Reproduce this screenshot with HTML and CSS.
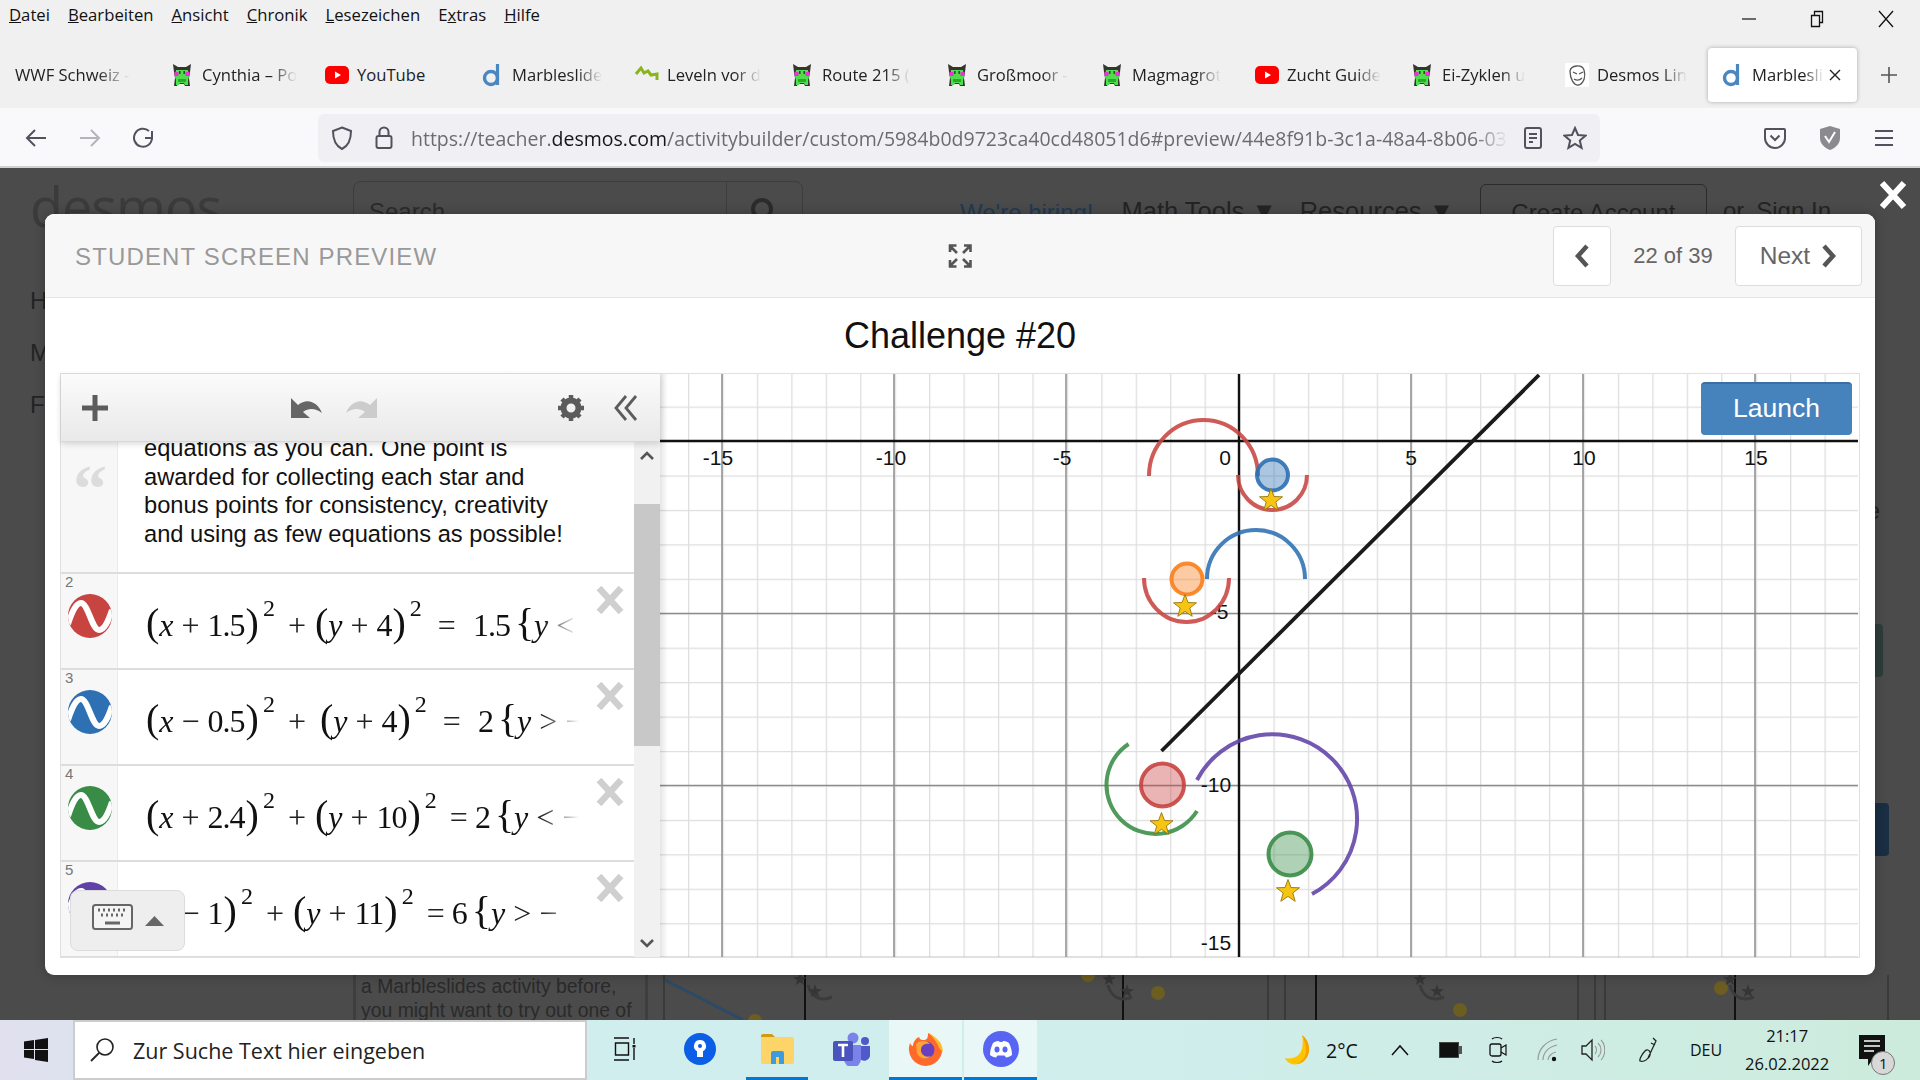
FILE: index.html
```html
<!DOCTYPE html>
<html>

<head>
    <title>Marbleslides</title>
    <link rel="stylesheet" href="styles.css">
</head>

<body>
    <!-- shared icons -->
    <svg class="defs" width="0" height="0">
        <symbol id="pika" viewBox="0 0 24 24">
            <path d="M3 1l5 3h8l5-3-1 8-1 6 1 8h-5l-1-2h-6l-1 2H4l1-8-1-6z" fill="#35352f" />
            <path d="M6 7h12l1 7-1 3 0 5h-3l-1-2H10l-1 2H6l0-5-1-3z" fill="#4ede4e" />
            <rect x="4.5" y="9" width="4" height="4" fill="#f02fd8" />
            <rect x="15.5" y="9" width="4" height="4" fill="#f02fd8" />
            <rect x="9" y="8" width="1.6" height="3" fill="#1d5a1d" />
            <rect x="13.4" y="8" width="1.6" height="3" fill="#1d5a1d" />
            <rect x="8" y="16" width="8" height="3" fill="#2aa82a" />
        </symbol>
        <symbol id="yt" viewBox="0 0 24 24">
            <rect x="0" y="3" width="24" height="18" rx="5" fill="#f00" />
            <path d="M10 8.5l6 3.5-6 3.5z" fill="#fff" />
        </symbol>
        <symbol id="dlogo" viewBox="0 0 24 24">
            <circle cx="11" cy="15" r="6.5" fill="none" stroke="#4a86c0" stroke-width="3.4" />
            <path d="M17.5 1v21" stroke="#4a86c0" stroke-width="3.2" />
        </symbol>
        <symbol id="wave" viewBox="0 0 44 44">
            <clipPath id="waveclip">
                <circle cx="22" cy="22" r="22" />
            </clipPath>
            <circle cx="22" cy="22" r="22" fill="currentColor" />
            <path clip-path="url(#waveclip)" d="M0 30C4 18 8 9 13 9c7 0 11 27 18 27 5 0 9-8 13-20" fill="none" stroke="#fff" stroke-width="6" />
        </symbol>
        <symbol id="del" viewBox="0 0 28 28">
            <path d="M3 2l22 24M25 2L3 26" stroke="#cfcfcf" stroke-width="6.5" fill="none" />
        </symbol>
        <symbol id="star" viewBox="-12 -12 24 24">
            <path d="M0-11.5l3 8 8.5.3-6.7 5.2 2.4 8.3L0 5.4l-7.200 4.900 2.400-8.300-6.700-5.200 8.500-.3z" fill="#f6c412" stroke="#96760e" stroke-width=".9" />
        </symbol>
        <symbol id="dimstar" viewBox="-12 -12 24 24">
            <path d="M0-11.5l3 8 8.5.3-6.7 5.2 2.4 8.3L0 5.4l-7.200 4.900 2.400-8.300-6.700-5.200 8.500-.3z" fill="#363636" />
        </symbol>
    </svg>

    <div class="window">
        <div class="menubar">
            <span><u>D</u>atei</span>
            <span><u>B</u>earbeiten</span>
            <span><u>A</u>nsicht</span>
            <span><u>C</u>hronik</span>
            <span><u>L</u>esezeichen</span>
            <span>E<u>x</u>tras</span>
            <span><u>H</u>ilfe</span>
            <div class="winbtns">
                <svg width="16" height="16" viewBox="0 0 16 16"><path d="M1 8h14" stroke="#111" stroke-width="1.2" /></svg>
                <svg width="16" height="18" viewBox="0 0 16 18"><path d="M2.500 5.500h8v11h-8zM5.500 5V1.500h8v11H11" fill="none" stroke="#111" stroke-width="1.300" /></svg>
                <svg width="18" height="18" viewBox="0 0 18 18"><path d="M2 1l14 16M16 1L2 17" stroke="#111" stroke-width="1.300" /></svg>
            </div>
        </div>

        <div class="tabs">
            <div class="tab nofav"><span class="tabtext">WWF Schweiz -</span></div>
            <div class="tab"><svg class="fav"><use href="#pika" /></svg><span class="tabtext">Cynthia – Po</span></div>
            <div class="tab"><svg class="fav"><use href="#yt" /></svg><span class="tabtext plain">YouTube</span></div>
            <div class="tab"><svg class="fav"><use href="#dlogo" /></svg><span class="tabtext">Marbleslide</span></div>
            <div class="tab"><svg class="fav" viewBox="0 0 24 24"><path d="M1 11l5-6 3 5 4-2 3 4 6-1v6" fill="none" stroke="#8db41f" stroke-width="3" /></svg><span class="tabtext">Leveln vor d</span></div>
            <div class="tab"><svg class="fav"><use href="#pika" /></svg><span class="tabtext">Route 215 (</span></div>
            <div class="tab"><svg class="fav"><use href="#pika" /></svg><span class="tabtext">Großmoor -</span></div>
            <div class="tab"><svg class="fav"><use href="#pika" /></svg><span class="tabtext">Magmagrot</span></div>
            <div class="tab"><svg class="fav"><use href="#yt" /></svg><span class="tabtext">Zucht Guide</span></div>
            <div class="tab"><svg class="fav"><use href="#pika" /></svg><span class="tabtext">Ei-Zyklen u</span></div>
            <div class="tab"><svg class="fav" viewBox="0 0 24 24"><rect width="24" height="24" fill="#fff" /><path d="M5 8c1-6 12-7 14-1 2 6 0 13-5 15-5 1-9-6-9-14zM8 9l4 2M14 11l4-2M9 16c3 2 6 1 8-1" fill="none" stroke="#555" stroke-width="1.300" /></svg><span class="tabtext">Desmos Lin</span></div>
            <div class="tab active">
                <svg class="fav"><use href="#dlogo" /></svg><span class="tabtext">Marblesli</span>
                <svg class="tabclose" width="12" height="12" viewBox="0 0 12 12"><path d="M1 1l10 10M11 1L1 11" stroke="#222" stroke-width="1.400" /></svg>
            </div>
            <svg class="newtab" width="18" height="18" viewBox="0 0 18 18"><path d="M9 1v16M1 9h16" stroke="#555" stroke-width="1.600" /></svg>
        </div>

        <div class="navbar">
            <svg class="navbtn" width="24" height="24" viewBox="0 0 24 24"><path d="M22 12H3M11 4l-8 8 8 8" fill="none" stroke="#52525e" stroke-width="2" /></svg>
            <svg class="navbtn" width="24" height="24" viewBox="0 0 24 24"><path d="M2 12h19M13 4l8 8-8 8" fill="none" stroke="#b4b4ba" stroke-width="2" /></svg>
            <svg class="navbtn" width="24" height="24" viewBox="0 0 24 24"><path d="M20 5v7h-7M20 12a9 9 0 1 1-3-7" fill="none" stroke="#52525e" stroke-width="2" /></svg>
            <div class="urlbar">
                <svg width="22" height="24" viewBox="0 0 22 24"><path d="M11 1.500l9 3.500c0 9-3 15-9 18-6-3-9-9-9-18z" fill="none" stroke="#52525e" stroke-width="2" /></svg>
                <svg class="lock" width="18" height="24" viewBox="0 0 18 24"><rect x="1.500" y="10" width="15" height="12" rx="2" fill="none" stroke="#52525e" stroke-width="2" /><path d="M4.500 10V6a4.500 4.500 0 0 1 9 0v4" fill="none" stroke="#52525e" stroke-width="2" /></svg>
                <span class="url">https://teacher.<b>desmos.com</b>/activitybuilder/custom/5984b0d9723ca40cd48051d6#preview/44e8f91b-3c1a-48a4-8b06-03</span>
                <svg width="18" height="22" viewBox="0 0 18 22"><rect x="1" y="1" width="16" height="20" rx="2" fill="none" stroke="#52525e" stroke-width="2" /><path d="M5 7h8M5 11h8M5 15h4" stroke="#52525e" stroke-width="2" /></svg>
                <svg class="urlstar" width="24" height="24" viewBox="0 0 24 24"><path d="M12 2l3 7 7.500.6-5.700 4.900 1.800 7.400L12 18l-6.600 3.900 1.800-7.400L1.500 9.600 9 9z" fill="none" stroke="#52525e" stroke-width="2" /></svg>
            </div>
            <div class="navright">
                <svg width="22" height="22" viewBox="0 0 22 22"><path d="M2 2h18a1 1 0 0 1 1 1v8a10 10 0 0 1-20 0V3a1 1 0 0 1 1-1z" fill="none" stroke="#52525e" stroke-width="2" /><path d="M6.500 8.500l4.500 4.500 4.500-4.500" fill="none" stroke="#52525e" stroke-width="2" /></svg>
                <svg width="24" height="26" viewBox="0 0 24 26"><path d="M2 4l10-3 10 3v9c0 6-5 10-10 12-5-2-10-6-10-12z" fill="#8a8a8f" /><path d="M7 11l4 6 6-10" fill="none" stroke="#fff" stroke-width="2" /></svg>
                <svg width="20" height="18" viewBox="0 0 20 18"><path d="M1 2h18M1 9h18M1 16h18" stroke="#52525e" stroke-width="2" /></svg>
            </div>
        </div>

        <div class="page">
            <!-- site behind the dialog -->
            <div class="site-nav">
                <span class="logo">desmos</span>
                <div class="sitesearch"><span class="sitesearch-text">Search</span><span class="sitesearch-btn"><svg width="28" height="28" viewBox="0 0 28 28"><circle cx="13" cy="13" r="9" fill="none" stroke="#2b2b2b" stroke-width="4" /></svg></span></div>
                <span class="hiring">We're hiring!</span>
                <span class="navlink">Math Tools ▼</span>
                <span class="navlink res">Resources ▼</span>
                <span class="createacc">Create Account</span>
                <span class="navlink signin">or, Sign In</span>
            </div>
            <div class="site-middle">
                <div class="letters"><span>H</span><span>M</span><span>F</span></div>
                <div class="rightbits">
                    <span class="rightletter">e</span>
                    <span class="teal"></span>
                    <span class="navy"></span>
                </div>
            </div>
            <div class="site-bottom">
                <div class="introcard">a Marbleslides activity before,<br>you might want to try out one of</div>
                <svg class="thumbs" viewBox="660 975 1260 45" width="1260" height="45">
                    <g stroke="#3a3a3a" stroke-width="2" fill="none">
                        <path d="M664 975v45M1268 975v45M1285 975v45M1578 975v45M1595 975v45M1605 975v45M1888 975v45" />
                        <path d="M805 975v45M1123 975v45M1316 975v45M1735 975v45" stroke="#111" />
                        <path d="M665 980l78 40" stroke="#2c4a66" stroke-width="3" />
                        <path d="M808 985c3 12 12 17 24 12M1108 985c3 12 12 17 24 12M1420 985c3 12 12 17 24 12M1730 985c3 12 12 17 24 12" stroke="#3b3b3b" stroke-width="3" />
                    </g>
                    <g fill="#6c5d20">
                        <circle cx="755" cy="1021" r="7" />
                        <circle cx="1088" cy="975" r="7" />
                        <circle cx="1158" cy="993" r="7" />
                        <circle cx="1460" cy="1010" r="7" />
                        <circle cx="1721" cy="988" r="7" />
                    </g>
                    <use href="#dimstar" x="793" y="972" width="14" height="14" />
                    <use href="#dimstar" x="808" y="984" width="14" height="14" />
                    <use href="#dimstar" x="1102" y="972" width="14" height="14" />
                    <use href="#dimstar" x="1120" y="984" width="14" height="14" />
                    <use href="#dimstar" x="1413" y="972" width="14" height="14" />
                    <use href="#dimstar" x="1430" y="984" width="14" height="14" />
                    <use href="#dimstar" x="1723" y="972" width="14" height="14" />
                    <use href="#dimstar" x="1741" y="984" width="14" height="14" />
                </svg>
            </div>

            <!-- preview dialog -->
            <svg class="closex" width="30" height="30" viewBox="0 0 30 30"><path d="M4 3l22 24M26 3L4 27" stroke="#fff" stroke-width="6" /></svg>
            <div class="modal">
                <div class="modal-head">
                    <div class="modal-title">STUDENT SCREEN PREVIEW</div>
                    <svg width="26" height="26" viewBox="0 0 26 26">
                        <path d="M10 10L3 3M3 9V2.500h6.500M16 10l7-7M17 2.500h6.500V9M10 16l-7 7M3 17v6.500h6.500M16 16l7 7M23.500 17v6.500H17" fill="none" stroke="#555" stroke-width="2.600" />
                    </svg>
                    <div class="pager">
                        <span class="pagebtn prev"><svg width="16" height="24" viewBox="0 0 16 24"><path d="M13 2L4 12l9 10" fill="none" stroke="#555" stroke-width="4.500" /></svg></span>
                        <span class="pagecount">22 of 39</span>
                        <span class="pagebtn next">Next<svg width="16" height="24" viewBox="0 0 16 24"><path d="M3 2l9 10-9 10" fill="none" stroke="#555" stroke-width="4.500" /></svg></span>
                    </div>
                </div>
                <div class="screen-title">Challenge #20</div>

                <div class="calc">
                    <div class="explist">
                        <div class="toolbar">
                            <svg width="26" height="26" viewBox="0 0 26 26"><path d="M13 0v26M0 13h26" stroke="#5c5c5c" stroke-width="5" /></svg>
                            <div class="undoredo">
                                <svg width="32" height="22" viewBox="0 0 32 22"><path d="M0 1v20h19l-7-6c7-5 13-3 19 1C27 6 17 0 7 8z" fill="#666" /></svg>
                                <svg width="32" height="22" viewBox="0 0 32 22"><path d="M32 1v20H13l7-6c-7-5-13-3-19 1C5 6 15 0 25 8z" fill="#ccc" /></svg>
                            </div>
                            <div class="toolright">
                                <svg width="26" height="26" viewBox="0 0 26 26"><circle cx="13" cy="13" r="7.500" fill="none" stroke="#5c5c5c" stroke-width="6" /><path d="M13 0v5M13 21v5M0 13h5M21 13h5M4 4l3.500 3.500M18.500 18.500L22 22M22 4l-3.500 3.500M7.500 18.500L4 22" stroke="#5c5c5c" stroke-width="4.500" /></svg>
                                <svg width="24" height="26" viewBox="0 0 24 26"><path d="M12 1L2 13l10 12M22 1L12 13l10 12" fill="none" stroke="#5c5c5c" stroke-width="2.800" /></svg>
                            </div>
                        </div>
                        <div class="listbody">
                            <div class="rows">
                                <div class="row noterow">
                                    <div class="gutter"><span class="quote">“</span></div>
                                    <div class="note">equations as you can. One point is<br>awarded for collecting each star and<br>bonus points for consistency, creativity<br>and using as few equations as possible!</div>
                                </div>
                                <div class="row">
                                    <div class="gutter"><span class="num">2</span><svg class="wave red"><use href="#wave" /></svg></div>
                                    <div class="math"><i class="p">(</i><i>x</i><b>+</b>1.5<i class="p">)</i><sup>2</sup><b class="wide">+</b><i class="p">(</i><i>y</i><b>+</b>4<i class="p">)</i><sup>2</sup><b class="eq">=</b>1.5<i class="p brace">{</i><i>y</i><b class="tight">&lt;</b></div>
                                    <div class="deletecol"><svg width="28" height="28"><use href="#del" /></svg></div>
                                </div>
                                <div class="row">
                                    <div class="gutter"><span class="num">3</span><svg class="wave blue"><use href="#wave" /></svg></div>
                                    <div class="math"><i class="p">(</i><i>x</i><b>−</b>0.5<i class="p">)</i><sup>2</sup><b class="wide more">+</b><i class="p">(</i><i>y</i><b>+</b>4<i class="p">)</i><sup>2</sup><b class="eq">=</b>2<i class="p brace">{</i><i>y</i><b class="tight">&gt;</b><b class="tight">−</b></div>
                                    <div class="deletecol"><svg width="28" height="28"><use href="#del" /></svg></div>
                                </div>
                                <div class="row">
                                    <div class="gutter"><span class="num">4</span><svg class="wave green"><use href="#wave" /></svg></div>
                                    <div class="math"><i class="p">(</i><i>x</i><b>+</b>2.4<i class="p">)</i><sup>2</sup><b class="wide">+</b><i class="p">(</i><i>y</i><b>+</b>10<i class="p">)</i><sup>2</sup><b class="eq close">=</b>2<i class="p brace">{</i><i>y</i><b class="tight">&lt;</b><b class="tight">−</b></div>
                                    <div class="deletecol"><svg width="28" height="28"><use href="#del" /></svg></div>
                                </div>
                                <div class="row">
                                    <div class="gutter"><span class="num">5</span><svg class="wave purple"><use href="#wave" /></svg></div>
                                    <div class="math"><i class="p">(</i><i>x</i><b>−</b>1<i class="p">)</i><sup>2</sup><b class="wide">+</b><i class="p">(</i><i>y</i><b>+</b>11<i class="p">)</i><sup>2</sup><b class="eq close">=</b>6<i class="p brace">{</i><i>y</i><b class="tight">&gt;</b><b class="tight">−</b></div>
                                    <div class="deletecol"><svg width="28" height="28"><use href="#del" /></svg></div>
                                </div>
                            </div>
                            <div class="scrollbar">
                                <svg width="16" height="10" viewBox="0 0 16 10"><path d="M2 8l6-6 6 6" fill="none" stroke="#555" stroke-width="2.600" /></svg>
                                <div class="thumb"></div>
                                <svg width="16" height="10" viewBox="0 0 16 10"><path d="M2 2l6 6 6-6" fill="none" stroke="#555" stroke-width="2.600" /></svg>
                            </div>
                        </div>
                        <div class="keypad">
                            <svg width="41" height="26" viewBox="0 0 41 26"><rect x="1" y="1" width="39" height="24" rx="2.500" fill="#f4f4f4" stroke="#666" stroke-width="2" /><path d="M6 6h2M11 6h2M16 6h2M21 6h2M26 6h2M31 6h2M9 11h2M14 11h2M19 11h2M24 11h2M29 11h2M13 19h15" stroke="#666" stroke-width="3" /></svg>
                            <svg width="19" height="10" viewBox="0 0 19 10"><path d="M9.500 0L19 10H0z" fill="#666" /></svg>
                        </div>
                    </div>

                    <div class="graph">
                        <svg class="plot" viewBox="660 374 1198 584" width="1198" height="584">
                            <defs>
                                <pattern id="minor" patternUnits="userSpaceOnUse" x="1239" y="441" width="34.440" height="34.440">
                                    <path d="M0 0v34.440M0 0h34.440" stroke="#dedede" stroke-width="2.600" fill="none" />
                                </pattern>
                                <linearGradient id="edge">
                                    <stop offset="0" stop-color="#000" stop-opacity=".1" />
                                    <stop offset="1" stop-color="#000" stop-opacity="0" />
                                </linearGradient>
                            </defs>
                            <rect x="660" y="374" width="1198" height="584" fill="url(#minor)" />
                            <path d="M722 374v584M894 374v584M1066 374v584M1411 374v584M1583 374v584M1755 374v584M660 613.500h1198M660 785.500h1198M660 957.500h1198" stroke="#8c8c8c" stroke-width="1.500" />
                            <rect x="660" y="374" width="8" height="584" fill="url(#edge)" />
                            <path d="M660 441h1198M1239 374v584" stroke="#111" stroke-width="2.400" />

                            <g class="ticks">
                                <text x="718" y="465">-15</text>
                                <text x="891" y="465">-10</text>
                                <text x="1062" y="465">-5</text>
                                <text x="1225" y="465">0</text>
                                <text x="1411" y="465">5</text>
                                <text x="1584" y="465">10</text>
                                <text x="1756" y="465">15</text>
                                <text x="1219" y="619">-5</text>
                                <text x="1216" y="792">-10</text>
                                <text x="1216" y="950">-15</text>
                            </g>

                            <path d="M1161.500 751L1539 375" stroke="#1a1a1a" stroke-width="3.800" fill="none" />
                            <g fill="none" stroke-width="4" stroke-opacity=".88">
                                <path d="M1149 476A54.500 56 0 0 1 1258 476" stroke="#c74440" />
                                <path d="M1238 475A34.500 35 0 0 0 1307 475" stroke="#c74440" />
                                <path d="M1207 579A49 49 0 0 1 1305 579" stroke="#2d70b3" />
                                <path d="M1144 578A42.500 44 0 0 0 1229 578" stroke="#c74440" />
                                <path d="M1128.600 744A49 49 0 1 0 1197 811" stroke="#388c46" />
                                <path d="M1197 780A84.800 84.800 0 1 1 1312 894" stroke="#6042a6" />
                            </g>
                            <g stroke-width="4" fill-opacity=".4" stroke-opacity=".9">
                                <circle cx="1272.500" cy="475" r="15.500" fill="#2d70b3" stroke="#2d70b3" />
                                <circle cx="1187" cy="579" r="15.500" fill="#fa7e19" stroke="#fa7e19" />
                                <circle cx="1162.500" cy="785" r="21.500" fill="#c74440" stroke="#c74440" />
                                <circle cx="1290" cy="854" r="21.500" fill="#388c46" stroke="#388c46" />
                            </g>
                            <use href="#star" x="1259" y="488" width="24" height="24" />
                            <use href="#star" x="1173" y="594" width="24" height="24" />
                            <use href="#star" x="1149.500" y="812" width="24" height="24" />
                            <use href="#star" x="1276" y="879" width="24" height="24" />
                        </svg>
                        <button class="launch">Launch</button>
                    </div>
                </div>
            </div>
        </div>

        <div class="taskbar">
            <svg class="winlogo" width="24" height="24" viewBox="0 0 24 24"><path d="M0 3.500l10-1.400V11H0zM11 2l13-2v11H11zM0 12h10v9L0 19.600zM11 12h13v12l-13-2z" fill="#111" /></svg>
            <div class="searchbox">
                <svg width="26" height="26" viewBox="0 0 26 26"><circle cx="16" cy="10" r="8" fill="none" stroke="#222" stroke-width="1.600" /><path d="M10 16L2 24" stroke="#222" stroke-width="1.800" /></svg>
                <span>Zur Suche Text hier eingeben</span>
            </div>
            <div class="taskapps">
                <div class="app view"><svg width="24" height="24" viewBox="0 0 24 24"><path d="M0 1h15M0 23h15M1.500 6h13v12h-13zM20 1v6M20 11v12" fill="none" stroke="#111" stroke-width="1.400" /><rect x="18.500" y="8" width="3" height="2.500" fill="#111" /></svg></div>
                <div class="app"><svg width="34" height="34" viewBox="0 0 34 34"><circle cx="17" cy="17" r="16" fill="#0a5fe6" /><path d="M17 8a6 6 0 0 1 3 11.200V25h-6v-5.800A6 6 0 0 1 17 8z" fill="#fff" /><circle cx="17" cy="14" r="2" fill="#0a5fe6" /></svg></div>
                <div class="app running"><svg width="34" height="30" viewBox="0 0 34 30"><path d="M1 2a2 2 0 0 1 2-2h9l3 3H1z" fill="#d19a10" /><path d="M1 3h31a2 2 0 0 1 2 2v23a2 2 0 0 1-2 2H3a2 2 0 0 1-2-2z" fill="#fcd468" /><path d="M11 30V19a2 2 0 0 1 2-2h9a2 2 0 0 1 2 2v11h-5v-7h-3v7z" fill="#3f9bdf" /></svg></div>
                <div class="app"><svg width="38" height="34" viewBox="0 0 38 34"><circle cx="20" cy="6" r="5.500" fill="#7b83eb" /><circle cx="32" cy="9" r="4" fill="#5059c9" /><path d="M27 14h10v10a6 6 0 0 1-10 3z" fill="#5059c9" /><path d="M11 13h17v14a7 7 0 0 1-17 0z" fill="#7b83eb" /><rect x="0" y="9" width="20" height="20" rx="2" fill="#4b53bc" /><path d="M5 13h10M10 13v12" stroke="#fff" stroke-width="2.600" /></svg></div>
                <div class="app active-app"><svg width="36" height="36" viewBox="0 0 36 36"><path d="M18 35A17 17 0 0 1 2 12c1 2 2 3 3 3 0-4 3-8 6-9 1 3 3 3 5 3 3 0 4-2 4-7 6 3 9 7 11 9 3 5 3 10 3 10a17 17 0 0 1-16 14z" fill="#ff6a2b" /><path d="M21 2c6 3 9 7 11 9 3 5 3 10 3 10l-4-4c-1-5-5-9-10-15z" fill="#ffbd2e" /><circle cx="18" cy="19" r="8.500" fill="#6a3fc0" /><path d="M8 13c4-4 11-4 14 0-5-1-9 1-9 6s5 8 10 6c-5 5-12 2-14-3z" fill="#ffa436" /></svg></div>
                <div class="app active-app"><svg width="36" height="36" viewBox="0 0 36 36"><circle cx="18" cy="18" r="18" fill="#5865f2" /><path d="M10 12c3-2 5-2 6-2l.5 1h3l.5-1c1 0 3 0 6 2 2 4 3 8 3 12-2 1.500-4 2.500-6 2.500l-1.500-2H14.500L13 26.500c-2 0-4-1-6-2.500 0-4 1-8 3-12z" fill="#fff" /><ellipse cx="14" cy="18.500" rx="2.500" ry="3" fill="#5865f2" /><ellipse cx="22" cy="18.500" rx="2.500" ry="3" fill="#5865f2" /></svg></div>
            </div>
            <div class="tray">
                <svg class="moon" width="30" height="32" viewBox="0 0 30 32"><path d="M19 1c8 6 10 19 2 26-5 4-13 5-17 0-1-1-2-2-2-3 8 2 15-2 17-9 1-5 1-10 0-14z" fill="#ffc400" /><path d="M19 1c8 6 10 19 2 26-2 2-5 3-8 3 7-2 11-9 10-16-1-5-2-9-4-13z" fill="#f4a300" /></svg>
                <span class="temp">2°C</span>
                <svg class="caret" width="18" height="12" viewBox="0 0 18 12"><path d="M1 11l8-9 8 9" fill="none" stroke="#111" stroke-width="1.500" /></svg>
                <svg class="trayicon t-bat" width="24" height="18" viewBox="0 0 24 18"><rect x="1.500" y="1.500" width="19" height="15" fill="#111" stroke="#444" /><rect x="21" y="5" width="3" height="8" fill="#555" /></svg>
                <svg class="trayicon t-cam" width="18" height="28" viewBox="0 0 18 28"><rect x="1" y="8" width="11" height="12" rx="2" fill="none" stroke="#111" stroke-width="1.300" /><path d="M12 12l5-3v10l-5-3M3 3c2-2 8-2 10 0M3 25c2 2 8 2 10 0" fill="none" stroke="#111" stroke-width="1.200" /></svg>
                <svg class="trayicon t-wifi" width="22" height="24" viewBox="0 0 22 24"><path d="M1 22C1 12 8 3 20 1M6 22c0-7 5-13 14-15M11 22c0-3 3-7 8-8" fill="none" stroke="#9a9a9a" stroke-width="1.200" /><circle cx="17" cy="21" r="2.200" fill="#111" /></svg>
                <svg class="trayicon t-vol" width="24" height="24" viewBox="0 0 24 24"><path d="M1 8h4l6-6v20l-6-6H1z" fill="none" stroke="#222" stroke-width="1.300" /><path d="M14 8c2 2 2 6 0 8M17 5c4 4 4 10 0 14M20 2c5 5 5 15 0 20" fill="none" stroke="#999" stroke-width="1.100" /></svg>
                <svg class="trayicon t-pen" width="22" height="26" viewBox="0 0 22 26"><path d="M15 1l3 3-8 17c-2 3-6 4-8 3-1-2 3-8 5-10 2-2 4-1 5 1 1 3-1 6-3 7M13 6l4 2" fill="none" stroke="#222" stroke-width="1.300" /></svg>
                <span class="lang">DEU</span>
                <div class="clock"><span>21:17</span><span>26.02.2022</span></div>
                <div class="notif">
                    <svg width="26" height="34" viewBox="0 0 26 34"><path d="M0 0h26v24H14l-5 7v-7H0z" fill="#111" /><path d="M5 6h16M5 11h16M5 16h10" stroke="#fff" stroke-width="1.500" /></svg>
                    <span class="badge">1</span>
                </div>
            </div>
        </div>
    </div>
</body>

</html>
```
FILE: styles.css
```css
* {
    box-sizing: border-box;
}

body {
    margin: 0;
    font-family: "Liberation Sans", sans-serif;
    overflow: hidden;
}

.defs {
    display: block;
    height: 0;
}

.window {
    width: 1920px;
    height: 1080px;
    display: flex;
    flex-direction: column;
    overflow: hidden;
}

/* browser chrome */
.menubar {
    height: 30px;
    padding-bottom: 2px;
    background: #f0f0f1;
    display: flex;
    align-items: center;
    padding-left: 9px;
    gap: 18px;
    font-family: "Open Sans", sans-serif;
    font-size: 16.700px;
    color: #111;
}

.winbtns {
    margin-left: auto;
    display: flex;
    align-items: center;
    gap: 52px;
    padding-right: 25px;
    padding-top: 10px;
}

.tabs {
    height: 78px;
    background: #f0f0f1;
    display: flex;
    align-items: center;
    padding: 12px 0 0 8px;
    font-family: "Open Sans", sans-serif;
    font-size: 16.600px;
    color: #222;
}

.tab {
    width: 155px;
    height: 54px;
    display: flex;
    align-items: center;
    padding-left: 7px;
    gap: 8px;
    flex: none;
}

.fav {
    width: 24px;
    height: 24px;
    flex: none;
}

.tabtext {
    margin-top: -2px;
    white-space: nowrap;
    -webkit-mask-image: linear-gradient(to right, #000 72%, transparent 100%);
    mask-image: linear-gradient(to right, #000 72%, transparent 100%);
}

.tabtext.plain {
    -webkit-mask-image: none;
    mask-image: none;
}

.tab.active {
    width: 149px;
    margin-left: -5px;
    background: #fff;
    border-radius: 4px;
    box-shadow: 0 0 4px rgba(0, 0, 0, .3);
    padding-left: 12px;
}

.tab.active .tabtext {
    width: 72px;
}

.tabclose {
    margin-left: -3px;
}

.newtab {
    margin-left: 23px;
}

.navbar {
    height: 60px;
    padding-top: 2px;
    background: #f9f9fb;
    border-bottom: 2px solid #d0d0d4;
    display: flex;
    align-items: center;
    padding-left: 24px;
}

.navbtn {
    margin-right: 30px;
}

.urlbar {
    width: 1282px;
    height: 48px;
    margin-left: 132px;
    background: #f0f0f4;
    border-radius: 6px;
    display: flex;
    align-items: center;
    padding-left: 13px;
}

.lock {
    margin-left: 22px;
}

.url {
    margin-left: 18px;
    width: 1097px;
    font-family: "Open Sans", sans-serif;
    font-size: 19.500px;
    color: #6b6b73;
    white-space: nowrap;
    -webkit-mask-image: linear-gradient(to right, #000 97%, transparent);
    mask-image: linear-gradient(to right, #000 97%, transparent);
}

.url b {
    font-weight: normal;
    color: #15141a;
}

.urlbar svg:nth-of-type(3) {
    margin-left: 16px;
}

.urlstar {
    margin-left: 21px;
}

.navright {
    margin-left: 164px;
    display: flex;
    align-items: center;
    gap: 32px;
}

/* dimmed site */
.page {
    position: relative;
    flex: 1;
    min-height: 0;
    background: #4b4b4b;
    display: flex;
    flex-direction: column;
    overflow: hidden;
    color: #242424;
}

.site-nav {
    height: 60px;
    display: flex;
    align-items: flex-start;
    padding-left: 30px;
    font-size: 24px;
    white-space: nowrap;
    flex: none;
}

.logo {
    font-size: 54px;
    line-height: 56px;
    width: 323px;
    padding-top: 10px;
    color: #3b3b3b;
    font-family: "Open Sans", sans-serif;
    letter-spacing: -1px;
}

.sitesearch {
    width: 450px;
    height: 60px;
    margin-top: 13px;
    border: 1px solid #3d3d3d;
    border-radius: 8px;
    display: flex;
    justify-content: space-between;
    color: #2b2b2b;
}

.sitesearch-text {
    padding: 16px 0 0 15px;
}

.sitesearch-btn {
    width: 76px;
    border-left: 1px solid #3d3d3d;
    padding: 14px 0 0 22px;
}

.hiring {
    margin: 31px 0 0 157px;
    color: #1f3a52;
}

.navlink {
    margin: 29px 0 0 28px;
    font-size: 25.500px;
}

.navlink.res {
    margin-left: 23px;
}

.createacc {
    margin: 16px 0 0 26px;
    width: 227px;
    height: 50px;
    padding-top: 14px;
    text-align: center;
    border: 1px solid #2b2b2b;
    border-radius: 6px;
}

.signin {
    margin-left: 16px;
    font-size: 24px;
}

.site-middle {
    flex: 1;
    display: flex;
    justify-content: space-between;
    padding-right: 31px;
}

.letters {
    padding: 47px 0 0 30px;
    display: flex;
    flex-direction: column;
    font-size: 24px;
    line-height: 52px;
}

.rightbits {
    display: flex;
    flex-direction: column;
    align-items: flex-end;
}

.rightletter {
    margin: 269px 9px 0 0;
    font-size: 24px;
    line-height: 28px;
}

.teal {
    margin-top: 99px;
    width: 20px;
    height: 53px;
    margin-right: 6px;
    background: #2e3d3a;
    border-radius: 4px;
}

.navy {
    margin-top: 126px;
    width: 20px;
    height: 53px;
    background: #1a2e44;
    border-radius: 4px;
}

.site-bottom {
    height: 45px;
    display: flex;
    flex: none;
    overflow: hidden;
}

.introcard {
    margin-left: 353px;
    width: 295px;
    padding-left: 5px;
    margin-top: -1px;
    border-left: 3px solid #3e3e3e;
    border-right: 3px solid #3e3e3e;
    font-size: 19.400px;
    line-height: 24px;
    white-space: nowrap;
    color: #2a2a2a;
}

.thumbs {
    margin-left: 12px;
    flex: none;
}

.closex {
    position: absolute;
    right: 12px;
    top: 12px;
}

/* dialog */
.modal {
    position: absolute;
    left: 45px;
    top: 46px;
    width: 1830px;
    height: 761px;
    background: #fff;
    border-radius: 9px;
    box-shadow: 0 0 12px rgba(0, 0, 0, .25);
    display: flex;
    flex-direction: column;
}

.modal-head {
    height: 84px;
    padding: 0 13px;
    background: #f7f7f7;
    border-bottom: 1px solid #e6e6e6;
    border-radius: 9px 9px 0 0;
    display: flex;
    align-items: center;
}

.modal-title {
    flex: 1;
    margin-top: 2px;
    text-indent: 17px;
    font-size: 24px;
    letter-spacing: 1.150px;
    color: #999;
}

.pager {
    flex: 1;
    display: flex;
    justify-content: flex-end;
    align-items: center;
    color: #666;
}

.pagebtn {
    height: 60px;
    background: #fff;
    border: 1px solid #ddd;
    border-radius: 4px;
    display: flex;
    align-items: center;
    justify-content: center;
}

.prev {
    width: 58px;
}

.next {
    width: 127px;
    gap: 11px;
    font-size: 24.500px;
}

.pagecount {
    width: 124px;
    text-align: center;
    font-size: 22px;
}

.screen-title {
    height: 75px;
    padding-top: 16px;
    text-align: center;
    font-size: 36px;
    line-height: 44px;
    color: #111;
    flex: none;
}

.calc {
    margin: 0 15px;
    height: 585px;
    border: 1px solid #e0e0e0;
    display: flex;
}

.explist {
    position: relative;
    width: 599px;
    display: flex;
    flex-direction: column;
    flex: none;
}

.toolbar {
    height: 68px;
    background: linear-gradient(#fbfbfb, #e9e9e9);
    border-bottom: 1px solid #d8d8d8;
    box-shadow: 0 2px 6px rgba(0, 0, 0, .15);
    display: flex;
    align-items: center;
    padding: 0 22px 0 21px;
    position: relative;
    z-index: 1;
    flex: none;
}

.undoredo {
    margin-left: 183px;
    display: flex;
    gap: 22px;
}

.toolright {
    margin-left: auto;
    display: flex;
    gap: 30px;
    align-items: center;
}

.listbody {
    flex: 1;
    min-height: 0;
    display: flex;
}

.rows {
    flex: 1;
    min-width: 0;
    overflow: hidden;
}

.row {
    height: 96px;
    border-bottom: 2px solid #ddd;
    display: flex;
}

.noterow {
    height: 132px;
}

.gutter {
    width: 57px;
    background: #f7f7f7;
    border-right: 1px solid #ebebeb;
    padding-left: 4px;
    flex: none;
    display: flex;
    flex-direction: column;
    align-items: flex-start;
    overflow: hidden;
}

.num {
    font-size: 15px;
    line-height: 16px;
    color: #777;
}

.wave {
    width: 44px;
    height: 44px;
    margin: 4px 0 0 3px;
    flex: none;
}

.red {
    color: #c74440;
}

.blue {
    color: #2d70b3;
}

.green {
    color: #388c46;
}

.purple {
    color: #6042a6;
}

.quote {
    font-family: "Liberation Serif", serif;
    font-weight: bold;
    font-size: 68px;
    line-height: 68px;
    color: #dcdcdc;
    margin: 13px 0 0 8px;
}

.note {
    margin-top: -8px;
    padding-left: 26px;
    font-size: 23.700px;
    line-height: 28.700px;
    color: #111;
    white-space: nowrap;
}

.math {
    flex: 1;
    min-width: 0;
    padding: 29px 0 0 27px;
    font-family: "Liberation Serif", serif;
    font-size: 32px;
    line-height: 40px;
    letter-spacing: -1px;
    color: #111;
    white-space: nowrap;
    -webkit-mask-image: linear-gradient(to right, #000 92%, transparent);
    mask-image: linear-gradient(to right, #000 92%, transparent);
}

.math b {
    font-weight: normal;
    margin: 0 9px;
    color: #222;
}

.math b.wide {
    margin: 0 9px 0 14px;
}

.math b.wide.more {
    margin: 0 14px 0 14px;
}

.math b.eq {
    margin: 0 18px 0 17px;
}

.math b.eq.close {
    margin: 0 8px 0 14px;
}

.math b.tight {
    margin: 0 0 0 9px;
}

.math .p {
    font-style: normal;
    font-size: 40px;
    font-weight: 300;
    margin: 0 1px;
}

.math .brace {
    margin: 0 1px 0 5px;
}

.math sup {
    font-size: 24px;
    line-height: 0;
    vertical-align: 20px;
    margin-left: 4px;
}

.deletecol {
    width: 55px;
    padding: 12px 0 0 17px;
    flex: none;
}

.scrollbar {
    width: 26px;
    background: #f1f1f1;
    display: flex;
    flex-direction: column;
    align-items: center;
    position: relative;
    flex: none;
    padding: 9px 0;
    justify-content: space-between;
}

.thumb {
    position: absolute;
    left: 0;
    right: 0;
    top: 62px;
    height: 242px;
    background: #c8c8c8;
}

.keypad {
    position: absolute;
    left: 9px;
    top: 516px;
    width: 115px;
    height: 61px;
    background: #eee;
    border: 1px solid #dcdcdc;
    border-radius: 8px;
    display: flex;
    align-items: flex-start;
    gap: 12px;
    padding: 13px 0 0 21px;
    z-index: 2;
}

.keypad svg:last-child {
    margin-top: 12px;
}

.graph {
    position: relative;
    flex: 1;
    min-width: 0;
    overflow: hidden;
}

.plot {
    display: block;
}

.ticks text {
    font-family: "Liberation Sans", sans-serif;
    font-size: 21px;
    text-anchor: middle;
    fill: #111;
}

.launch {
    position: absolute;
    top: 8px;
    right: 7px;
    width: 151px;
    height: 53px;
    padding-bottom: 3px;
    background: #4682bc;
    color: #fff;
    border: 0;
    border-top: 2px solid #3a6fa5;
    border-radius: 4px;
    font-family: "Liberation Sans", sans-serif;
    font-size: 26.500px;
}

/* windows taskbar */
.taskbar {
    height: 60px;
    background: linear-gradient(to right, #e0e0ee 0, #d0eeee 30%, #cfeeec 60%, #cdebdc 100%);
    display: flex;
    flex: none;
    align-items: center;
    font-family: "Open Sans", sans-serif;
    color: #111;
}

.winlogo {
    margin-left: 24px;
    flex: none;
}

.searchbox {
    margin-left: 25px;
    width: 514px;
    height: 60px;
    background: #fff;
    border: 2px solid #ccc;
    display: flex;
    align-items: center;
    gap: 18px;
    padding-left: 14px;
    font-size: 21.500px;
    color: #222;
    flex: none;
}

.taskapps {
    display: flex;
    height: 60px;
    margin-left: 3px;
    flex: none;
}

.app {
    width: 75px;
    display: flex;
    align-items: center;
    justify-content: center;
    border-bottom: 3px solid transparent;
}

.app.view {
    width: 72px;
}

.app.running {
    width: 62px;
    margin: 0 6px 0 9px;
    border-bottom-color: #0078d4;
}

.active-app {
    width: 73px;
    margin-right: 2px;
    background: rgba(255, 255, 255, .55);
    border-bottom-color: #0078d4;
}

.tray {
    flex: 1;
    display: flex;
    align-items: center;
    height: 60px;
    padding-left: 244px;
    font-size: 17px;
}

.temp {
    margin-left: 13px;
    font-size: 19.500px;
    width: 50px;
}

.caret {
    margin-left: 15px;
}

.trayicon {
    margin-left: 22px;
}

.t-bat {
    margin-left: 29px;
}

.t-cam {
    margin-left: 27px;
}

.t-wifi {
    margin-left: 30px;
}

.t-pen {
    margin-left: 33px;
}

.lang {
    margin-left: 30px;
    font-size: 16px;
}

.clock {
    margin-left: 3px;
    width: 124px;
    display: flex;
    flex-direction: column;
    align-items: center;
    gap: 6px;
    font-size: 16.500px;
    line-height: 22px;
}

.notif {
    position: relative;
    margin-left: 10px;
    margin-top: 4px;
}

.notif svg {
    display: block;
}

.badge {
    position: absolute;
    left: 12px;
    top: 16px;
    width: 24px;
    height: 24px;
    border-radius: 50%;
    background: #d8d8d8;
    border: 1px solid #777;
    text-align: center;
    font-size: 15px;
    line-height: 22px;
}
```
